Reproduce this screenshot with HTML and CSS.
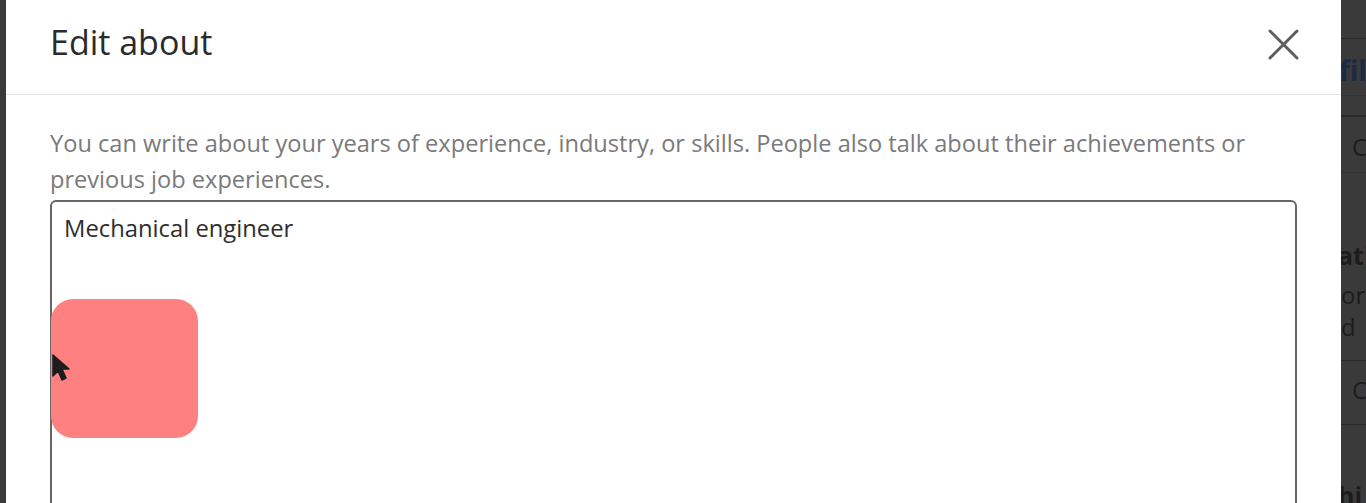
FILE: index.html
```html
<!DOCTYPE html>
<html lang="en">
<head>
  <meta charset="UTF-8">
  <title>Edit about</title>
  <meta name="viewport" content="width=device-width, initial-scale=1.0">
  <link rel="stylesheet" href="styles.css">
</head>
<body>

  <div class="screen">
    <div class="modal">
      <div class="modal-header">
        <h2>Edit about</h2>
        <button class="close" aria-label="Dismiss">
          <svg width="31" height="31" viewBox="0 0 31 31">
            <path d="M2 2 L29 29 M29 2 L2 29" stroke="#5e5e5e" stroke-width="3" stroke-linecap="round" fill="none"/>
          </svg>
        </button>
      </div>
      <div class="modal-body">
        <p class="hint">You can write about your years of experience, industry, or skills. People also talk about their achievements or previous job experiences.</p>
        <div class="field">
          <div class="field-text">Mechanical engineer</div>
          <div class="tap-mark"></div>
          <svg class="pointer" width="24" height="30" viewBox="0 0 24 30">
            <path d="M1 1 L1 22 L6 17 L10 26 L14 24 L10 15 L17 15 Z" fill="#1c1c1c" stroke="#1c1c1c" stroke-width="1.5" stroke-linejoin="round"/>
          </svg>
        </div>
      </div>
    </div>

    <div class="page-behind">
      <div class="pb-rule pb-r1"></div>
      <div class="pb-link">fil</div>
      <div class="pb-rule pb-r2"></div>
      <div class="pb-rule pb-r3"></div>
      <div class="pb-text pb-c1">C</div>
      <div class="pb-rule pb-r4"></div>
      <div class="pb-head pb-h1">ati</div>
      <div class="pb-text pb-or">or</div>
      <div class="pb-text">d</div>
      <div class="pb-rule pb-r5"></div>
      <div class="pb-text pb-c2">C</div>
      <div class="pb-rule pb-r6"></div>
      <div class="pb-head pb-h2">hi</div>
    </div>
  </div>

</body>
</html>
```

FILE: styles.css
```css
body {
  margin: 0;
  background: #3a3a3a;
  font-family: 'Open Sans', sans-serif;
  overflow: hidden;
}

.screen {
  display: flex;
  height: 503px;
  overflow: hidden;
  padding-left: 6px;
  background: #3a3a3a;
}

.modal {
  width: 1335px;
  flex-shrink: 0;
  background: #fff;
}

.modal-header {
  display: flex;
  align-items: center;
  justify-content: space-between;
  height: 94px;
  padding: 0 42px 0 44px;
  border-bottom: 1px solid #e4e4e4;
}

.modal-header h2 {
  margin: 0 0 10px;
  font-size: 34px;
  font-weight: 400;
  color: #2b2b2b;
}

.close {
  border: 0;
  background: none;
  padding: 0;
  margin-bottom: 6px;
  cursor: pointer;
}

.close svg {
  display: block;
}

.modal-body {
  padding: 30px 44px 0;
}

.hint {
  margin: 0 0 3px;
  font-size: 23.6px;
  line-height: 36px;
  color: #7a7a7a;
}

.field {
  position: relative;
  height: 320px;
  border: 2px solid #666;
  border-radius: 6px;
  padding: 11px 12px;
}

.field-text {
  font-size: 23.8px;
  line-height: 30px;
  color: #2e2e2e;
}

.tap-mark {
  position: absolute;
  left: -1px;
  top: 97px;
  width: 147px;
  height: 139px;
  border-radius: 22px;
  background: #ff8080;
}

.pointer {
  position: absolute;
  left: 0;
  top: 152px;
}

.page-behind {
  flex: 1;
  overflow: hidden;
  white-space: nowrap;
  background: #3a3a3a;
  color: #1c1c1c;
  font-size: 24px;
}

.pb-rule {
  height: 1px;
  background: #2a2a2a;
}

.pb-r1 { margin-top: 38px; }
.pb-r2 { margin-top: 5px; background: #2b3445; }
.pb-r3 { margin-top: 19px; height: 2px; }
.pb-r4 { margin-top: 10px; background: #333; }
.pb-r5 { margin-top: 17px; }
.pb-r6 { margin-top: 19px; }

.pb-link {
  margin: 11px 0 0 -2px;
  color: #1b2a45;
  font-weight: 700;
  font-size: 28px;
  line-height: 40px;
}

.pb-text {
  line-height: 32px;
}

.pb-c1 {
  margin: 15px 0 0 11px;
  line-height: 30px;
}

.pb-head {
  font-size: 25px;
  font-weight: 700;
  line-height: 32px;
}

.pb-h1 { margin: 66px 0 0 -3px; }
.pb-or { margin-top: 8px; }

.pb-c2 {
  margin: 14px 0 0 11px;
  line-height: 30px;
}

.pb-h2 { margin: 54px 0 0 -3px; }
```
